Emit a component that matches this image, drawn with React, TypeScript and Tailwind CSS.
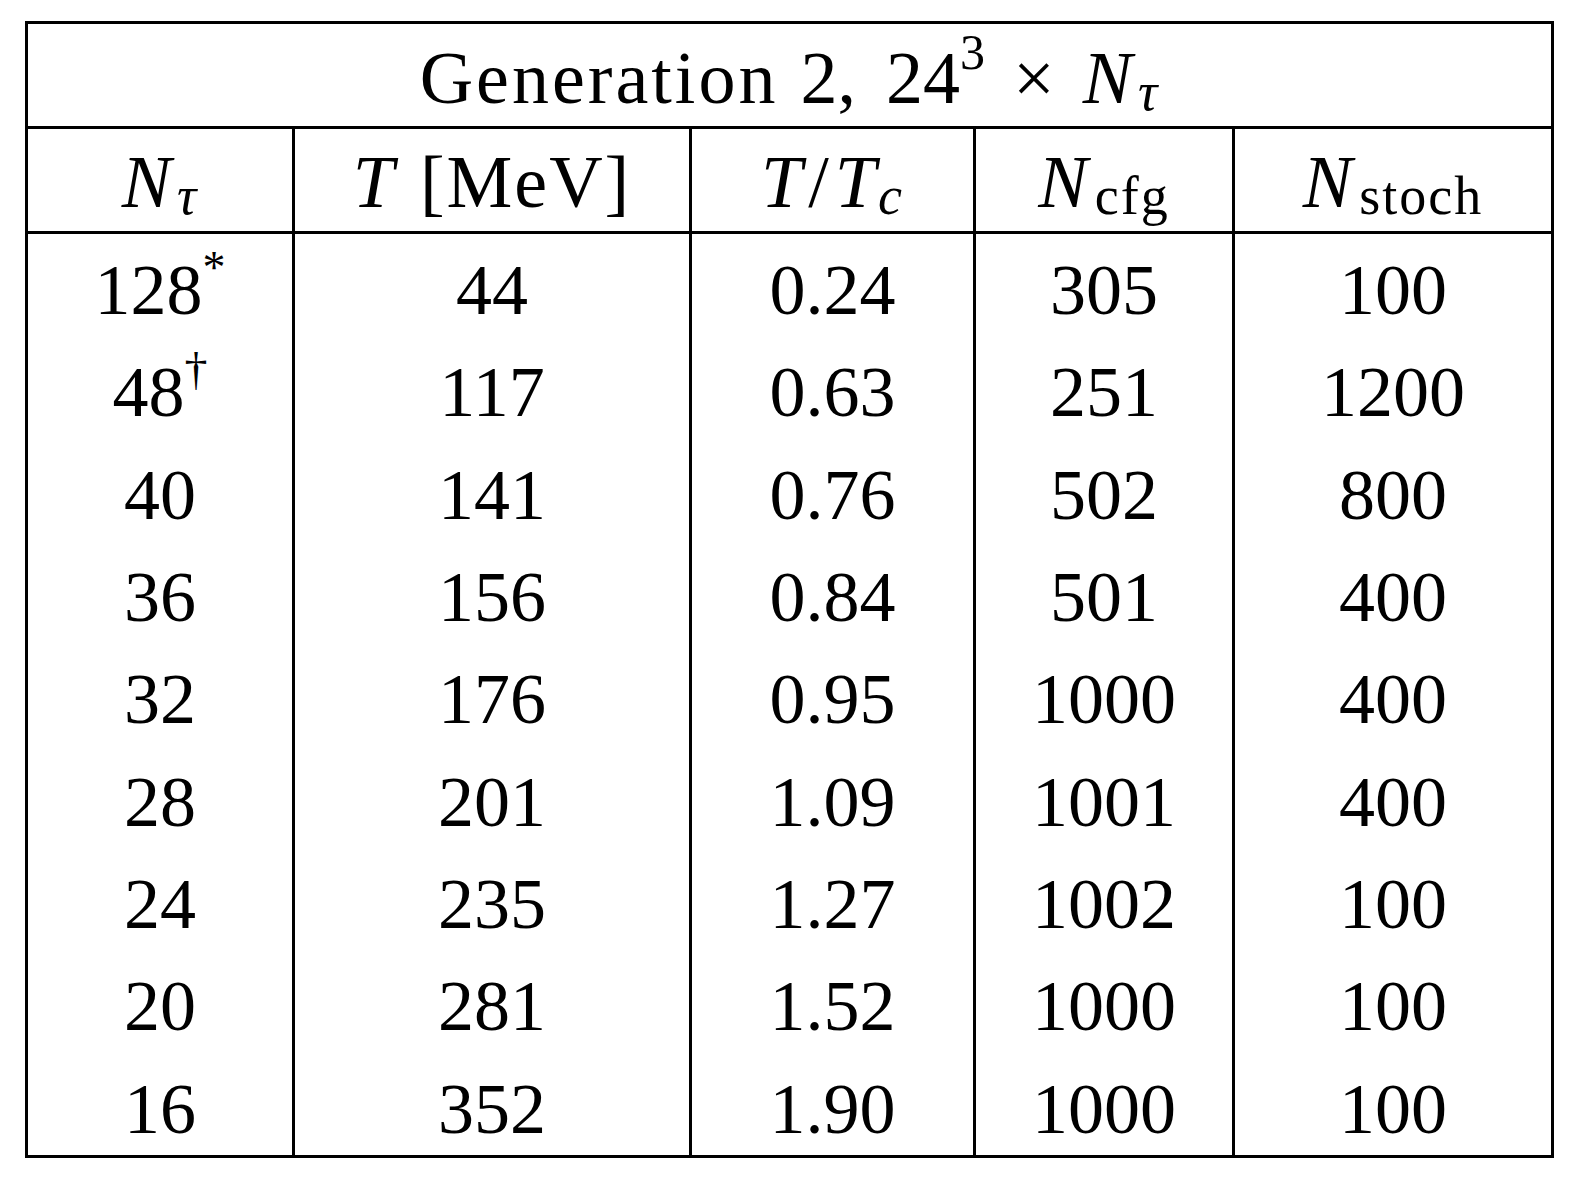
const rows: [string, string | null, string, string, string, string][] = [
  ["128", "*", "44", "0.24", "305", "100"],
  ["48", "†", "117", "0.63", "251", "1200"],
  ["40", null, "141", "0.76", "502", "800"],
  ["36", null, "156", "0.84", "501", "400"],
  ["32", null, "176", "0.95", "1000", "400"],
  ["28", null, "201", "1.09", "1001", "400"],
  ["24", null, "235", "1.27", "1002", "100"],
  ["20", null, "281", "1.52", "1000", "100"],
  ["16", null, "352", "1.90", "1000", "100"],
];

const cols = "grid grid-cols-[267px_397px_284px_259px_316px]";

function Sub({ children, italic }: { children: React.ReactNode; italic?: boolean }) {
  return (
    <span className={`relative top-[14px] text-[54px] tracking-[2px] ${italic ? "italic ml-[2px]" : "ml-[3px]"}`}>
      {children}
    </span>
  );
}

export default function App() {
  return (
    <div className="min-h-screen bg-white pl-[25px] pt-[21px] font-['Liberation_Serif',serif] text-black">
      <div className="w-[1529px] border-[3px] border-black">
        {/* title */}
        <div className="flex h-[105px] items-center justify-center border-b-[3px] border-black pt-[6px] text-[74px] leading-none">
          <span className="tracking-[3px]">Generation</span>
          <span className="ml-[22px]">2,</span>
          <span className="ml-[30px]">24</span>
          <span className="relative -top-[26px] text-[50px]">3</span>
          <span className="mx-[28px]">×</span>
          <span className="italic tracking-[4px]">N</span>
          <Sub italic>τ</Sub>
        </div>

        {/* header */}
        <div className={`${cols} h-[105px] border-b-[3px] border-black text-[74px] leading-none`}>
          <div className="flex items-center justify-center border-r-[3px] border-black pt-[4px]">
            <span className="italic tracking-[4px]">N</span>
            <Sub italic>τ</Sub>
          </div>
          <div className="flex items-center justify-center border-r-[3px] border-black pt-[4px]">
            <span className="italic">T</span>
            <span className="ml-[26px] tracking-[2px]">[MeV]</span>
          </div>
          <div className="flex items-center justify-center border-r-[3px] border-black pt-[4px]">
            <span className="italic">T</span>
            <span className="mx-[6px]">/</span>
            <span className="italic">T</span>
            <Sub italic>c</Sub>
          </div>
          <div className="flex items-center justify-center border-r-[3px] border-black pt-[4px]">
            <span className="italic tracking-[4px]">N</span>
            <Sub>cfg</Sub>
          </div>
          <div className="flex items-center justify-center pt-[4px]">
            <span className="italic tracking-[4px]">N</span>
            <Sub>stoch</Sub>
          </div>
        </div>

        {/* data */}
        <div className={`${cols} text-[72px] leading-none`}>
          {rows.map(([nt, mark, t, ttc, cfg, stoch]) => (
            <div key={nt} className="contents">
              <div className="flex h-[102.33px] items-center justify-center border-r-[3px] border-black pt-[10px]">
                <span>{nt}</span>
                {mark && <span className="relative -top-[22px] text-[46px]">{mark}</span>}
              </div>
              <div className="flex h-[102.33px] items-center justify-center border-r-[3px] border-black pt-[10px]">{t}</div>
              <div className="flex h-[102.33px] items-center justify-center border-r-[3px] border-black pt-[10px]">{ttc}</div>
              <div className="flex h-[102.33px] items-center justify-center border-r-[3px] border-black pt-[10px]">{cfg}</div>
              <div className="flex h-[102.33px] items-center justify-center pt-[10px]">{stoch}</div>
            </div>
          ))}
        </div>
      </div>
    </div>
  );
}
